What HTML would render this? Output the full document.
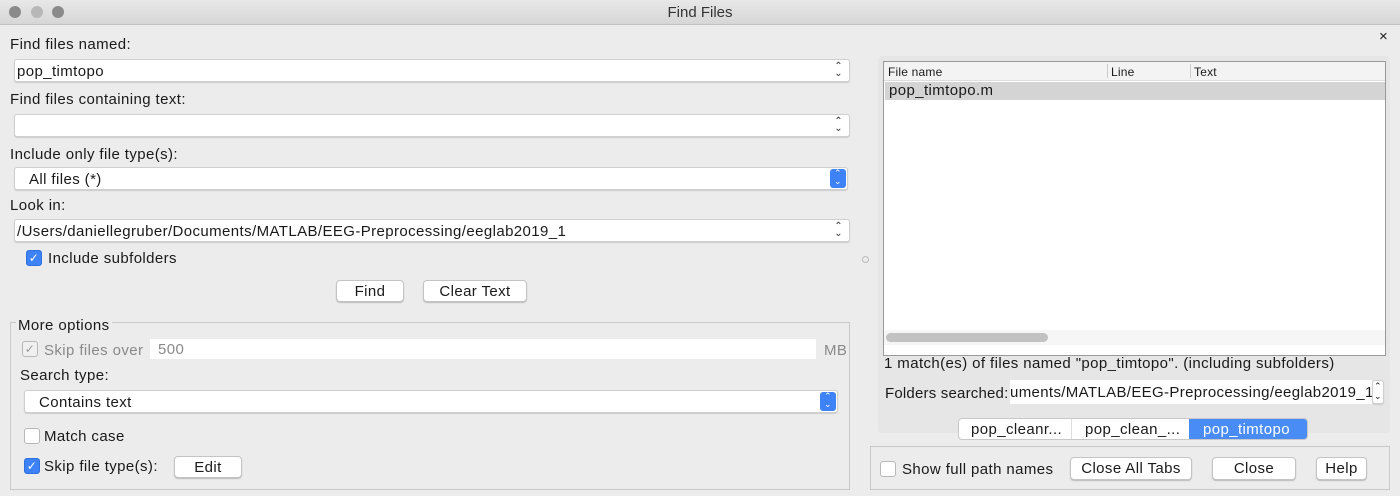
<!DOCTYPE html><html><head><style>
body{margin:0;width:1400px;height:496px;background:#ececec;font-family:"Liberation Sans",sans-serif;font-size:15px;letter-spacing:0.4px;color:#1a1a1a;position:relative;overflow:hidden}
.a{position:absolute}
.t{position:absolute;white-space:nowrap;line-height:16px;padding-top:1px}
.in{position:absolute;background:#fff;border:1px solid #cfcfcf;border-radius:3px;box-sizing:border-box;box-shadow:0 1px 1px #ccc}
.btn{position:absolute;background:#fff;border:1px solid #c4c4c4;border-radius:4px;box-sizing:border-box;text-align:center;line-height:21px;box-shadow:0 1px 1px #bbb}
.cb{position:absolute;width:16px;height:16px;box-sizing:border-box;border-radius:3px;border:1px solid #b8b8b8;background:#fff}
.cb.on{background:#3d82f7;border-color:#2f6fde;color:#fff;font-size:12px;line-height:14px;text-align:center}
.step{position:absolute;right:6px;top:3px;font-size:10px;line-height:7px;color:#333;text-align:center}
</style></head><body>
<div class="a" style="left:0;top:0;width:1400px;height:24px;background:linear-gradient(#e8e8e8,#d6d6d6);border-bottom:1px solid #c2c2c2"></div>
<div class="a" style="left:9px;top:6px;width:12px;height:12px;border-radius:50%;background:#8a8a8a"></div>
<div class="a" style="left:31px;top:6px;width:12px;height:12px;border-radius:50%;background:#b8b8b8"></div>
<div class="a" style="left:52px;top:6px;width:12px;height:12px;border-radius:50%;background:#8a8a8a"></div>
<div class="t" style="left:0;width:1400px;text-align:center;top:4px;color:#333;letter-spacing:0">Find Files</div>

<div class="t" style="left:10px;top:36px">Find files named:</div>
<div class="in" style="left:14px;top:59px;width:836px;height:23px"><span class="t" style="left:2px;top:3px">pop_timtopo</span><span class="step">⌃<br>⌄</span></div>
<div class="t" style="left:10px;top:91px">Find files containing text:</div>
<div class="in" style="left:14px;top:114px;width:836px;height:23px"><span class="step">⌃<br>⌄</span></div>
<div class="t" style="left:10px;top:146px">Include only file type(s):</div>
<div class="in" style="left:14px;top:167px;width:834px;height:23px"><span class="t" style="left:14px;top:3px">All files (*)</span><span class="a" style="right:1px;top:1px;width:16px;height:19px;background:#3d82f7;border-radius:3px;color:#fff;font-size:9px;line-height:8px;text-align:center">⌃<br>⌄</span></div>
<div class="t" style="left:10px;top:197px">Look in:</div>
<div class="in" style="left:14px;top:219px;width:836px;height:23px"><span class="t" style="left:2px;top:3px">/Users/daniellegruber/Documents/MATLAB/EEG-Preprocessing/eeglab2019_1</span><span class="step">⌃<br>⌄</span></div>
<div class="cb on" style="left:26px;top:250px">✓</div>
<div class="t" style="left:48px;top:250px">Include subfolders</div>
<div class="btn" style="left:336px;top:280px;width:68px;height:22px">Find</div>
<div class="btn" style="left:423px;top:280px;width:104px;height:22px">Clear Text</div>

<div class="a" style="left:10px;top:322px;width:840px;height:168px;border:1px solid #c8c8c8;box-sizing:border-box"></div>
<div class="t" style="left:16px;top:317px;background:#ececec;padding:1px 2px 0">More options</div>
<div class="cb" style="left:22px;top:341px;background:#f0f0f0;color:#999;font-size:12px;line-height:14px;text-align:center">✓</div>
<div class="t" style="left:44px;top:342px;color:#8a8a8a">Skip files over</div>
<div class="a" style="left:150px;top:339px;width:666px;height:20px;background:#fff"><span class="t" style="left:8px;top:2px;color:#8a8a8a">500</span></div>
<div class="t" style="left:824px;top:342px;color:#8a8a8a">MB</div>
<div class="t" style="left:20px;top:367px">Search type:</div>
<div class="in" style="left:24px;top:390px;width:814px;height:23px"><span class="t" style="left:14px;top:3px">Contains text</span><span class="a" style="right:1px;top:1px;width:16px;height:19px;background:#3d82f7;border-radius:3px;color:#fff;font-size:9px;line-height:8px;text-align:center">⌃<br>⌄</span></div>
<div class="cb" style="left:24px;top:428px"></div>
<div class="t" style="left:44px;top:428px">Match case</div>
<div class="cb on" style="left:24px;top:458px">✓</div>
<div class="t" style="left:44px;top:458px">Skip file type(s):</div>
<div class="btn" style="left:174px;top:456px;width:68px;height:22px">Edit</div>
<div class="a" style="left:862px;top:256px;width:5px;height:5px;border-radius:50%;border:1px solid #bbb"></div>

<div class="t" style="left:1379px;top:28px;font-size:15px">×</div>
<div class="a" style="left:878px;top:56px;width:512px;height:377px;background:#e6e6e6;border-radius:4px"></div>
<div class="a" style="left:883px;top:61px;width:503px;height:295px;background:#fff;border:1px solid #999;box-sizing:border-box"></div>
<div class="a" style="left:884px;top:62px;width:501px;height:18px;background:#f3f3f3;border-bottom:1px solid #ddd;font-size:12px;letter-spacing:0.2px">
<span class="t" style="left:4px;top:1px">File name</span><span class="a" style="left:223px;top:2px;height:14px;border-left:1px solid #ccc"></span><span class="t" style="left:227px;top:1px">Line</span><span class="a" style="left:306px;top:2px;height:14px;border-left:1px solid #ccc"></span><span class="t" style="left:310px;top:1px">Text</span></div>
<div class="a" style="left:885px;top:82px;width:500px;height:18px;background:#d4d4d4"><span class="t" style="left:4px;top:0px">pop_timtopo.m</span></div>
<div class="a" style="left:884px;top:330px;width:501px;height:15px;background:#f6f6f6"></div>
<div class="a" style="left:886px;top:333px;width:162px;height:9px;background:#c2c2c2;border-radius:5px"></div>
<div class="t" style="left:884px;top:355px">1 match(es) of files named "pop_timtopo". (including subfolders)</div>
<div class="t" style="left:885px;top:385px;letter-spacing:0.2px">Folders searched:</div>
<div class="a" style="left:1010px;top:380px;width:362px;height:24px;background:#fff;overflow:hidden"><span class="t" style="left:0px;top:4px;letter-spacing:0.35px">uments/MATLAB/EEG-Preprocessing/eeglab2019_1</span></div>
<div class="in" style="left:1372px;top:380px;width:12px;height:24px;font-size:9px;line-height:10px;text-align:center">⌃<br>⌄</div>
<div class="a" style="left:958px;top:418px;width:350px;height:22px;background:#fff;border:1px solid #c8c8c8;border-radius:4px;box-sizing:border-box;overflow:hidden">
<span class="t" style="left:12px;top:2px">pop_cleanr...</span><span class="a" style="left:112px;top:0;height:22px;border-left:1px solid #ddd"></span>
<span class="t" style="left:126px;top:2px">pop_clean_...</span>
<span class="a" style="left:230px;top:0;width:120px;height:22px;background:#4a8cf5;color:#fff"><span class="t" style="left:14px;top:2px">pop_timtopo</span></span></div>
<div class="a" style="left:870px;top:446px;width:520px;height:44px;border:1px solid #c8c8c8;box-sizing:border-box"></div>
<div class="cb" style="left:880px;top:461px"></div>
<div class="t" style="left:902px;top:461px">Show full path names</div>
<div class="btn" style="left:1070px;top:457px;width:122px;height:23px">Close All Tabs</div>
<div class="btn" style="left:1212px;top:457px;width:84px;height:23px">Close</div>
<div class="btn" style="left:1316px;top:457px;width:51px;height:23px">Help</div>
</body></html>
